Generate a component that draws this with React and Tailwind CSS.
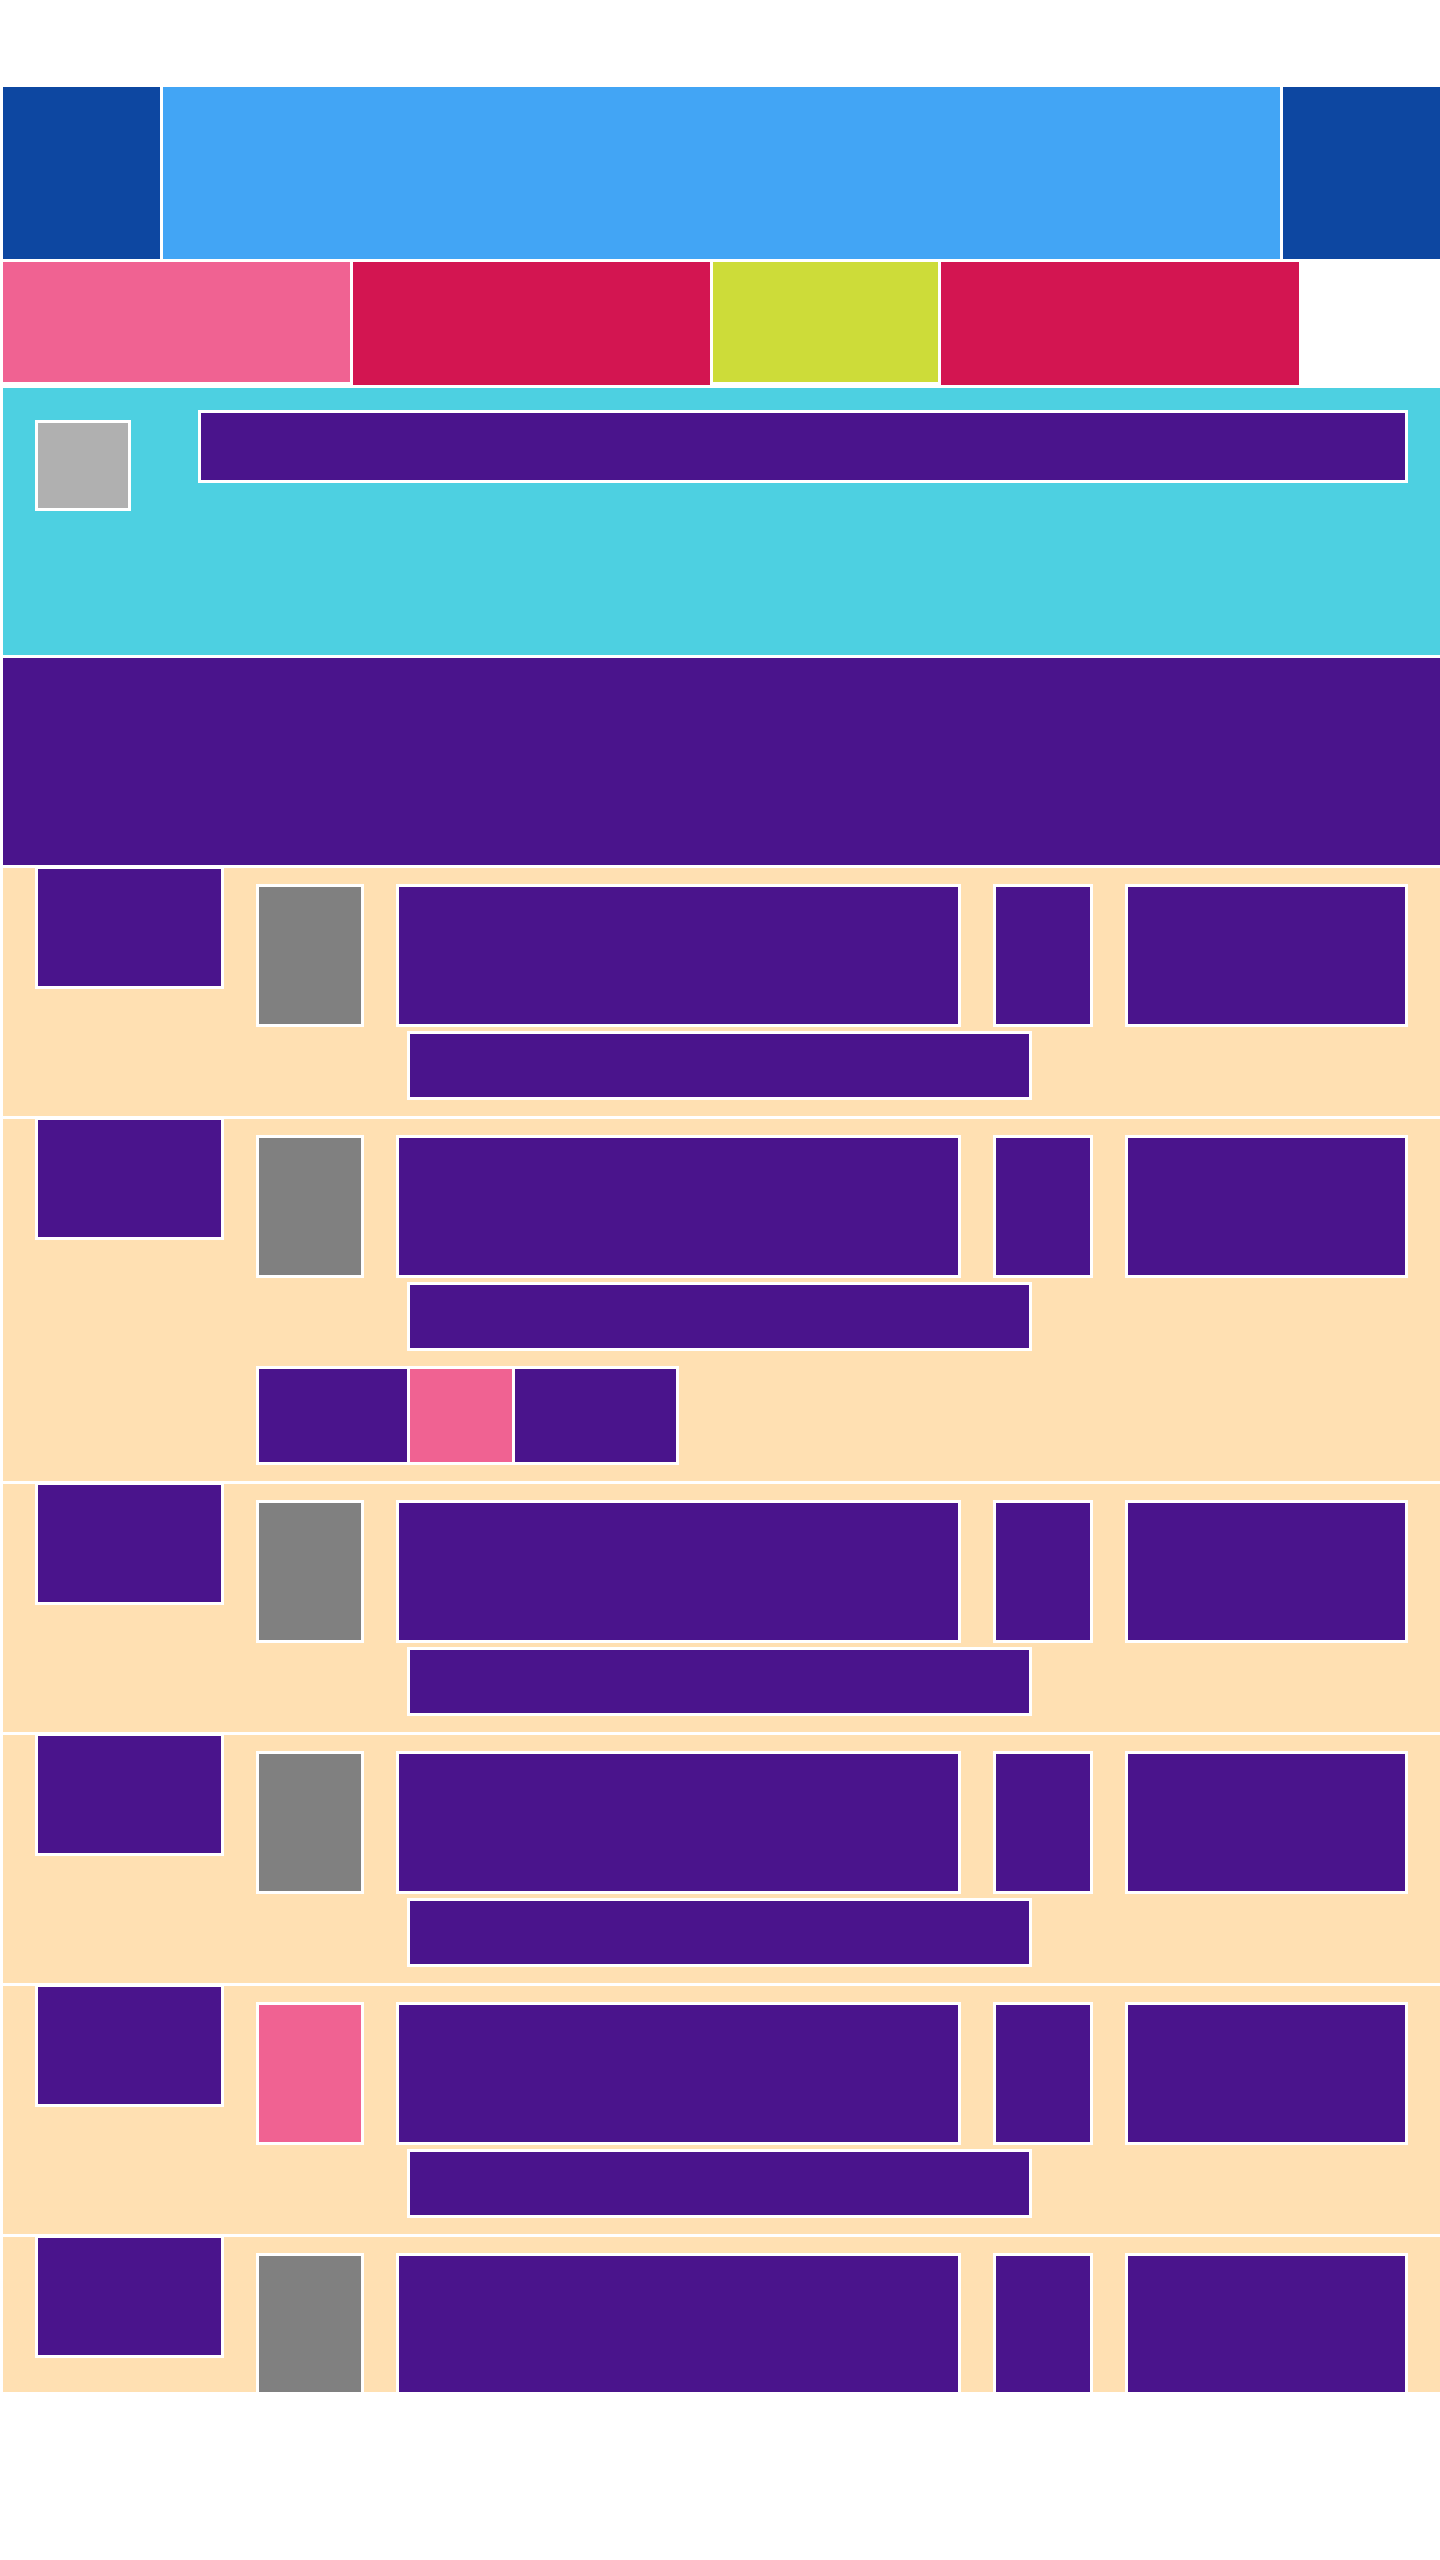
import React from "react";

function Row({ pinkThumb = false, tabs = false }) {
  return (
    <div className="flex shrink-0 items-start bg-[#ffe0b2] pl-[32px]">
      <div className="h-[121px] w-[189px] shrink-0 border-x-[3px] border-t border-b-[3px] border-white bg-[#4a148c]" />
      <div className="ml-[32px] flex flex-col pt-[16px] pb-[16px]">
        <div className="flex gap-[32px]">
          <div
            className={
              pinkThumb
                ? "h-[143px] w-[108px] border-[3px] border-white bg-[#f06292]"
                : "h-[143px] w-[108px] border-[3px] border-white bg-[#808080]"
            }
          />
          <div className="h-[143px] w-[565px] border-[3px] border-white bg-[#4a148c]" />
          <div className="h-[143px] w-[100px] border-[3px] border-white bg-[#4a148c]" />
          <div className="h-[143px] w-[283px] border-[3px] border-white bg-[#4a148c]" />
        </div>
        <div className="mt-[4px] ml-[151px] h-[69px] w-[625px] border-[3px] border-white bg-[#4a148c]" />
        {tabs && (
          <div className="mt-[15px] flex h-[99px] w-[423px] border-[3px] border-white bg-white">
            <div className="h-full w-[148px] border-r-[3px] border-white bg-[#4a148c] box-content" />
            <div className="h-full w-[102px] border-r-[3px] border-white bg-[#f06292] box-content" />
            <div className="h-full w-[161px] bg-[#4a148c]" />
          </div>
        )}
      </div>
    </div>
  );
}

export default function App() {
  return (
    <div className="min-h-[2560px] w-[1440px] bg-white">
      <div className="flex flex-col gap-[3px] pt-[87px] pl-[3px]">
        {/* header */}
        <div className="flex h-[172px] gap-[3px]">
          <div className="w-[157px] shrink-0 bg-[#0d47a1]" />
          <div className="flex-1 bg-[#42a5f5]" />
          <div className="w-[157px] shrink-0 bg-[#0d47a1]" />
        </div>
        {/* nav */}
        <div className="flex h-[123px] items-start gap-[3px]">
          <div className="h-[120px] w-[347px] bg-[#f06292]" />
          <div className="h-[123px] w-[357px] bg-[#d31551]" />
          <div className="h-[120px] w-[225px] bg-[#cddc39]" />
          <div className="h-[123px] w-[358px] bg-[#d31551]" />
        </div>
        {/* cyan hero */}
        <div className="flex h-[267px] items-start bg-[#4dd0e1] pt-[22px] pl-[32px]">
          <div className="mt-[10px] h-[91px] w-[96px] shrink-0 border-[3px] border-white bg-[#b0b0b0]" />
          <div className="ml-[67px] h-[73px] w-[1210px] shrink-0 border-[3px] border-white bg-[#4a148c]" />
        </div>
        {/* purple band */}
        <div className="h-[207px] bg-[#4a148c]" />
        {/* list */}
        <div className="flex h-[1524px] flex-col gap-[3px] overflow-hidden bg-white">
          <Row />
          <Row tabs />
          <Row />
          <Row />
          <Row pinkThumb />
          <Row />
        </div>
      </div>
    </div>
  );
}
